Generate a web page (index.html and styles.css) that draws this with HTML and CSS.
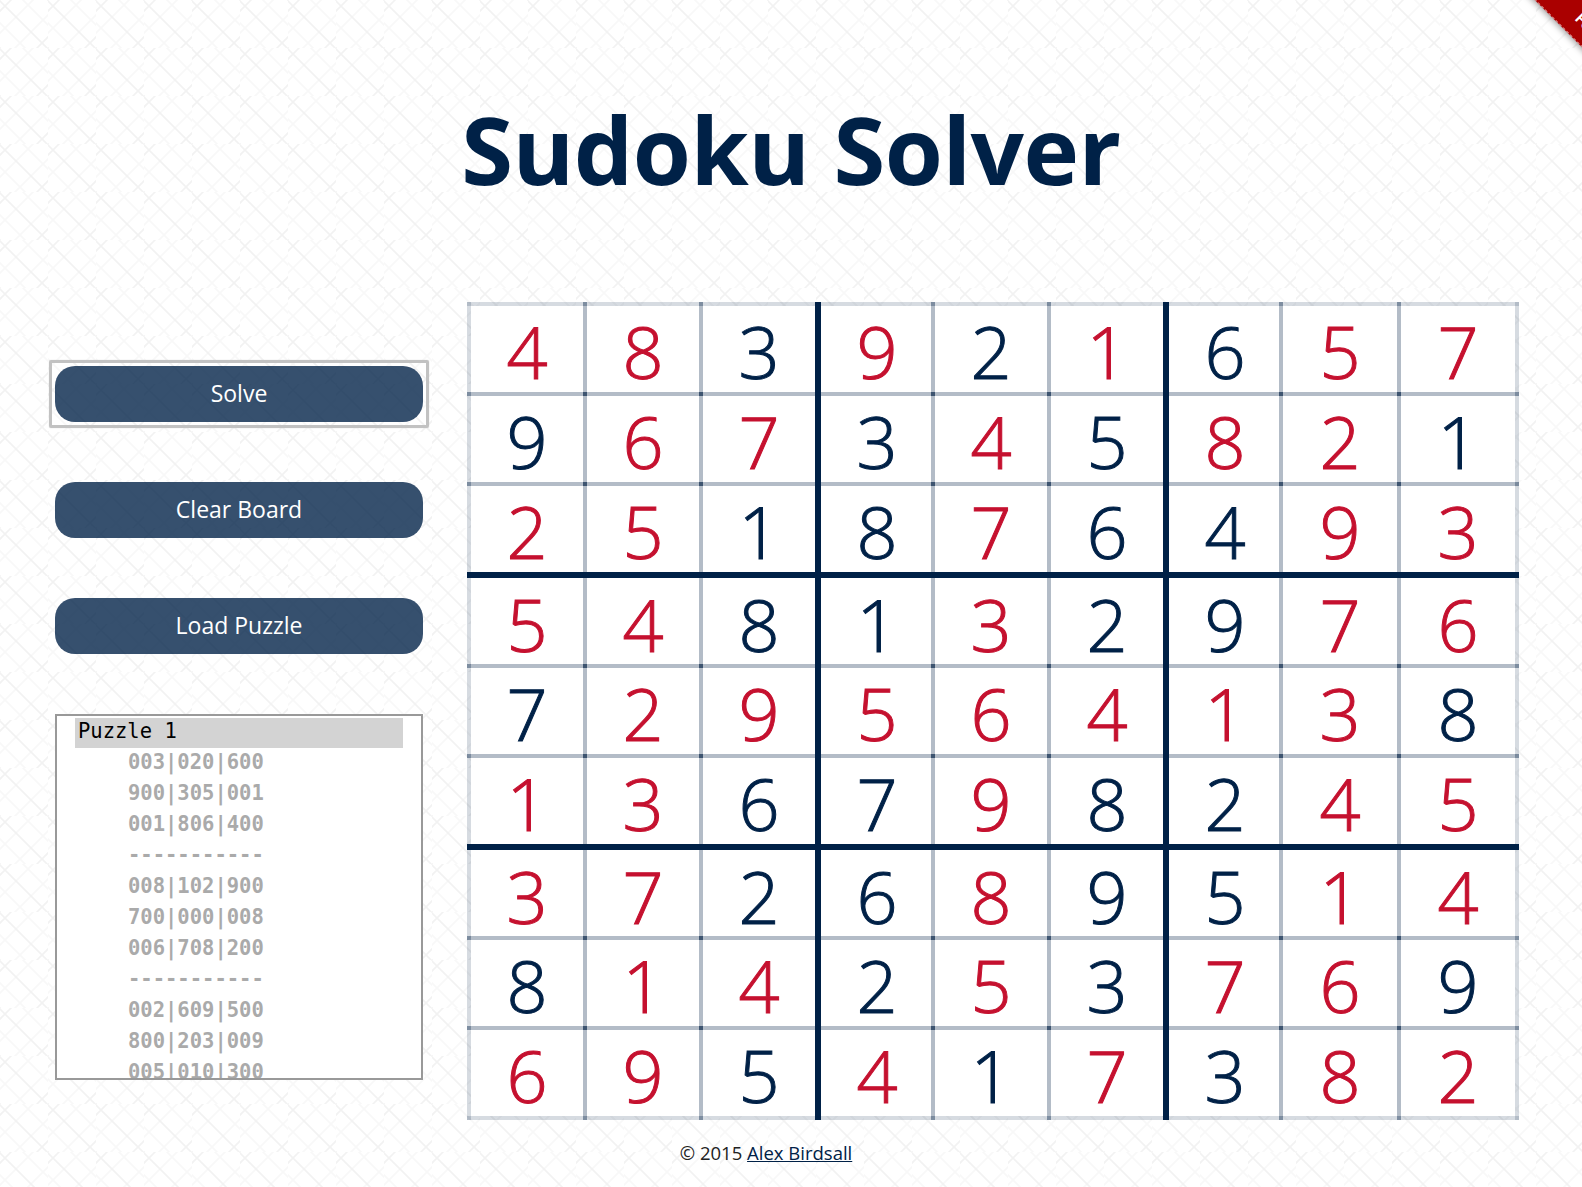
FILE: index.html
```html
<!DOCTYPE html>
<html lang="en">
<head>
  <meta charset="UTF-8" />
  <title>Sudoku Solver</title>
  <link rel="stylesheet" href="styles.css">
</head>
<body>

  <!-- Ribbon -->
  <div class="ribbon-wrap">
    <a class="ribbon" href="#">Fork me on GitHub</a>
  </div>

  <header>
    <h1>Sudoku Solver</h1>
  </header>

  <main>
    <!-- Controls -->
    <aside class="controls">
      <button class="btn btn-focus">Solve</button>
      <button class="btn">Clear Board</button>
      <button class="btn">Load Puzzle</button>

      <ul class="puzzles">
        <li class="puzzle-name">Puzzle 1</li>
        <li>003|020|600</li>
        <li>900|305|001</li>
        <li>001|806|400</li>
        <li>-----------</li>
        <li>008|102|900</li>
        <li>700|000|008</li>
        <li>006|708|200</li>
        <li>-----------</li>
        <li>002|609|500</li>
        <li>800|203|009</li>
        <li>005|010|300</li>
      </ul>
    </aside>

    <!-- Board -->
    <section class="board">
      <div class="cell s">4</div><div class="cell s">8</div><div class="cell">3</div><div class="cell s">9</div><div class="cell">2</div><div class="cell s">1</div><div class="cell">6</div><div class="cell s">5</div><div class="cell s">7</div>
      <div class="cell">9</div><div class="cell s">6</div><div class="cell s">7</div><div class="cell">3</div><div class="cell s">4</div><div class="cell">5</div><div class="cell s">8</div><div class="cell s">2</div><div class="cell">1</div>
      <div class="cell s">2</div><div class="cell s">5</div><div class="cell">1</div><div class="cell">8</div><div class="cell s">7</div><div class="cell">6</div><div class="cell">4</div><div class="cell s">9</div><div class="cell s">3</div>
      <div class="cell s">5</div><div class="cell s">4</div><div class="cell">8</div><div class="cell">1</div><div class="cell s">3</div><div class="cell">2</div><div class="cell">9</div><div class="cell s">7</div><div class="cell s">6</div>
      <div class="cell">7</div><div class="cell s">2</div><div class="cell s">9</div><div class="cell s">5</div><div class="cell s">6</div><div class="cell s">4</div><div class="cell s">1</div><div class="cell s">3</div><div class="cell">8</div>
      <div class="cell s">1</div><div class="cell s">3</div><div class="cell">6</div><div class="cell">7</div><div class="cell s">9</div><div class="cell">8</div><div class="cell">2</div><div class="cell s">4</div><div class="cell s">5</div>
      <div class="cell s">3</div><div class="cell s">7</div><div class="cell">2</div><div class="cell">6</div><div class="cell s">8</div><div class="cell">9</div><div class="cell">5</div><div class="cell s">1</div><div class="cell s">4</div>
      <div class="cell">8</div><div class="cell s">1</div><div class="cell s">4</div><div class="cell">2</div><div class="cell s">5</div><div class="cell">3</div><div class="cell s">7</div><div class="cell s">6</div><div class="cell">9</div>
      <div class="cell s">6</div><div class="cell s">9</div><div class="cell">5</div><div class="cell s">4</div><div class="cell">1</div><div class="cell s">7</div><div class="cell">3</div><div class="cell s">8</div><div class="cell s">2</div>

      <!-- thick lines between the 3x3 boxes -->
      <div class="rule rule-v rule-v1"></div>
      <div class="rule rule-v rule-v2"></div>
      <div class="rule rule-h rule-h1"></div>
      <div class="rule rule-h rule-h2"></div>
    </section>
  </main>

  <footer>
    &copy; 2015 <a href="#">Alex Birdsall</a>
  </footer>

</body>
</html>
```

FILE: styles.css
```css
body {
  margin: 0;
  height: 1187px;
  overflow: hidden;
  font-family: "Open Sans", sans-serif;
  color: #002147;
  background-color: #fff;
  background-image: url("data:image/svg+xml,%3Csvg xmlns='http://www.w3.org/2000/svg' width='48' height='48'%3E%3Cg fill='none' stroke-width='1.6'%3E%3Cpath stroke='%23f8f8f8' d='M-2 21L27 50M21 -2L50 27M-2 35L35 -2M13 50L50 13'/%3E%3Cpath stroke='%23f2f2f2' d='M-2 -1L49 50M-3 45L3 51M45 -3L51 3M-2 13L13 -2M35 50L50 35'/%3E%3C/g%3E%3C/svg%3E");
}

/* Ribbon */
.ribbon-wrap {
  position: absolute;
  top: 0;
  right: 0;
  width: 60px;
  height: 60px;
  overflow: hidden;
}

.ribbon {
  position: absolute;
  top: -7px;
  left: -46px;
  width: 200px;
  height: 40px;
  box-sizing: border-box;
  padding-left: 103px;
  transform: rotate(45deg);
  background: #a00;
  border-bottom: 1px dashed #e09a9a;
  box-shadow: 0 2px 6px rgba(0, 0, 0, 0.35);
  color: #fff;
  font-weight: 700;
  font-size: 15px;
  line-height: 40px;
  white-space: nowrap;
  text-decoration: none;
}

/* Title */
header {
  height: 302px;
  box-sizing: border-box;
  padding-top: 89px;
  text-align: center;
}

h1 {
  margin: 0;
  font-size: 94px;
  line-height: 120px;
  font-weight: 700;
  letter-spacing: -0.5px;
}

main {
  display: flex;
  align-items: flex-start;
  padding-left: 55px;
  gap: 48px;
}

/* Left column */
.controls {
  width: 368px;
  padding-top: 64px;
}

.btn {
  position: relative;
  display: block;
  width: 100%;
  height: 56px;
  margin-bottom: 60px;
  border: 0;
  border-radius: 20px;
  padding: 0 0 2px;
  background: rgba(0, 33, 71, 0.79);
  color: #fff;
  font-family: inherit;
  font-size: 23px;
}

/* square focus ring, an outline would follow the button's radius */
.btn-focus::after {
  content: "";
  position: absolute;
  top: -6px;
  right: -6px;
  bottom: -6px;
  left: -6px;
  border: 3px solid #c2c2c2;
  border-radius: 2px;
  box-shadow: 0 0 1px #c2c2c2;
}

.puzzles {
  list-style-type: none;
  margin: 0;
  padding: 2px 18px 0;
  height: 360px;
  overflow: hidden;
  background: #fff;
  border: 2px solid #999;
  font-family: "DejaVu Sans Mono", monospace;
  font-size: 20.5px;
  font-weight: 700;
  color: #aaa;
}

.puzzles li {
  line-height: 31.1px;
  padding-left: 53px;
}

.puzzles .puzzle-name {
  height: 30px;
  margin-bottom: -1.5px;
  line-height: 27px;
  padding-left: 3px;
  background: #d3d3d3;
  color: #000;
  font-weight: 400;
}

/* Board */
.board {
  position: relative;
  margin: 4px 0 0;
  display: grid;
  grid-template-columns: repeat(7, 112px) 114px 114px;
  grid-template-rows: 86px 86px 86px 88px 86px 86px 88px 86px 86px;
  gap: 4px;
  background: #fff;
}

.cell {
  position: relative;
  display: flex;
  align-items: center;
  justify-content: center;
  padding-top: 3px;
  background: #fff;
  font-size: 72px;
  font-weight: 300;
  -webkit-text-stroke: 1px currentColor;
  line-height: 1;
}

.cell.s {
  color: #c5112f;
}

/* each cell paints its own 4px frame, the frames overlap and get darker */
.cell::before,
.cell::after {
  content: "";
  position: absolute;
  top: -4px;
  right: -4px;
  bottom: -4px;
  left: -4px;
  border: 0 solid rgba(0, 33, 71, 0.16);
}

.cell::before {
  border-width: 4px 0;
}

.cell::after {
  border-width: 0 4px;
}

/* first column and row after a thick line start 2px under it */
.cell:nth-child(9n+4),
.cell:nth-child(9n+7) {
  padding-left: 4px;
}

.cell:nth-child(n+28):nth-child(-n+36),
.cell:nth-child(n+55):nth-child(-n+63) {
  padding-top: 7px;
}

.rule {
  position: absolute;
  z-index: 1;
  background: #002147;
}

.rule-v {
  top: -4px;
  bottom: -4px;
  width: 6px;
}

.rule-v1 { left: 344px; }
.rule-v2 { left: 692px; }

.rule-h {
  left: -4px;
  right: -4px;
  height: 6px;
}

.rule-h1 { top: 266px; }
.rule-h2 { top: 538px; }

footer {
  margin-top: 25px;
  padding-right: 50px;
  font-size: 18.5px;
  line-height: 24px;
  text-align: center;
  color: #222;
}

footer a {
  color: #002147;
}
```
